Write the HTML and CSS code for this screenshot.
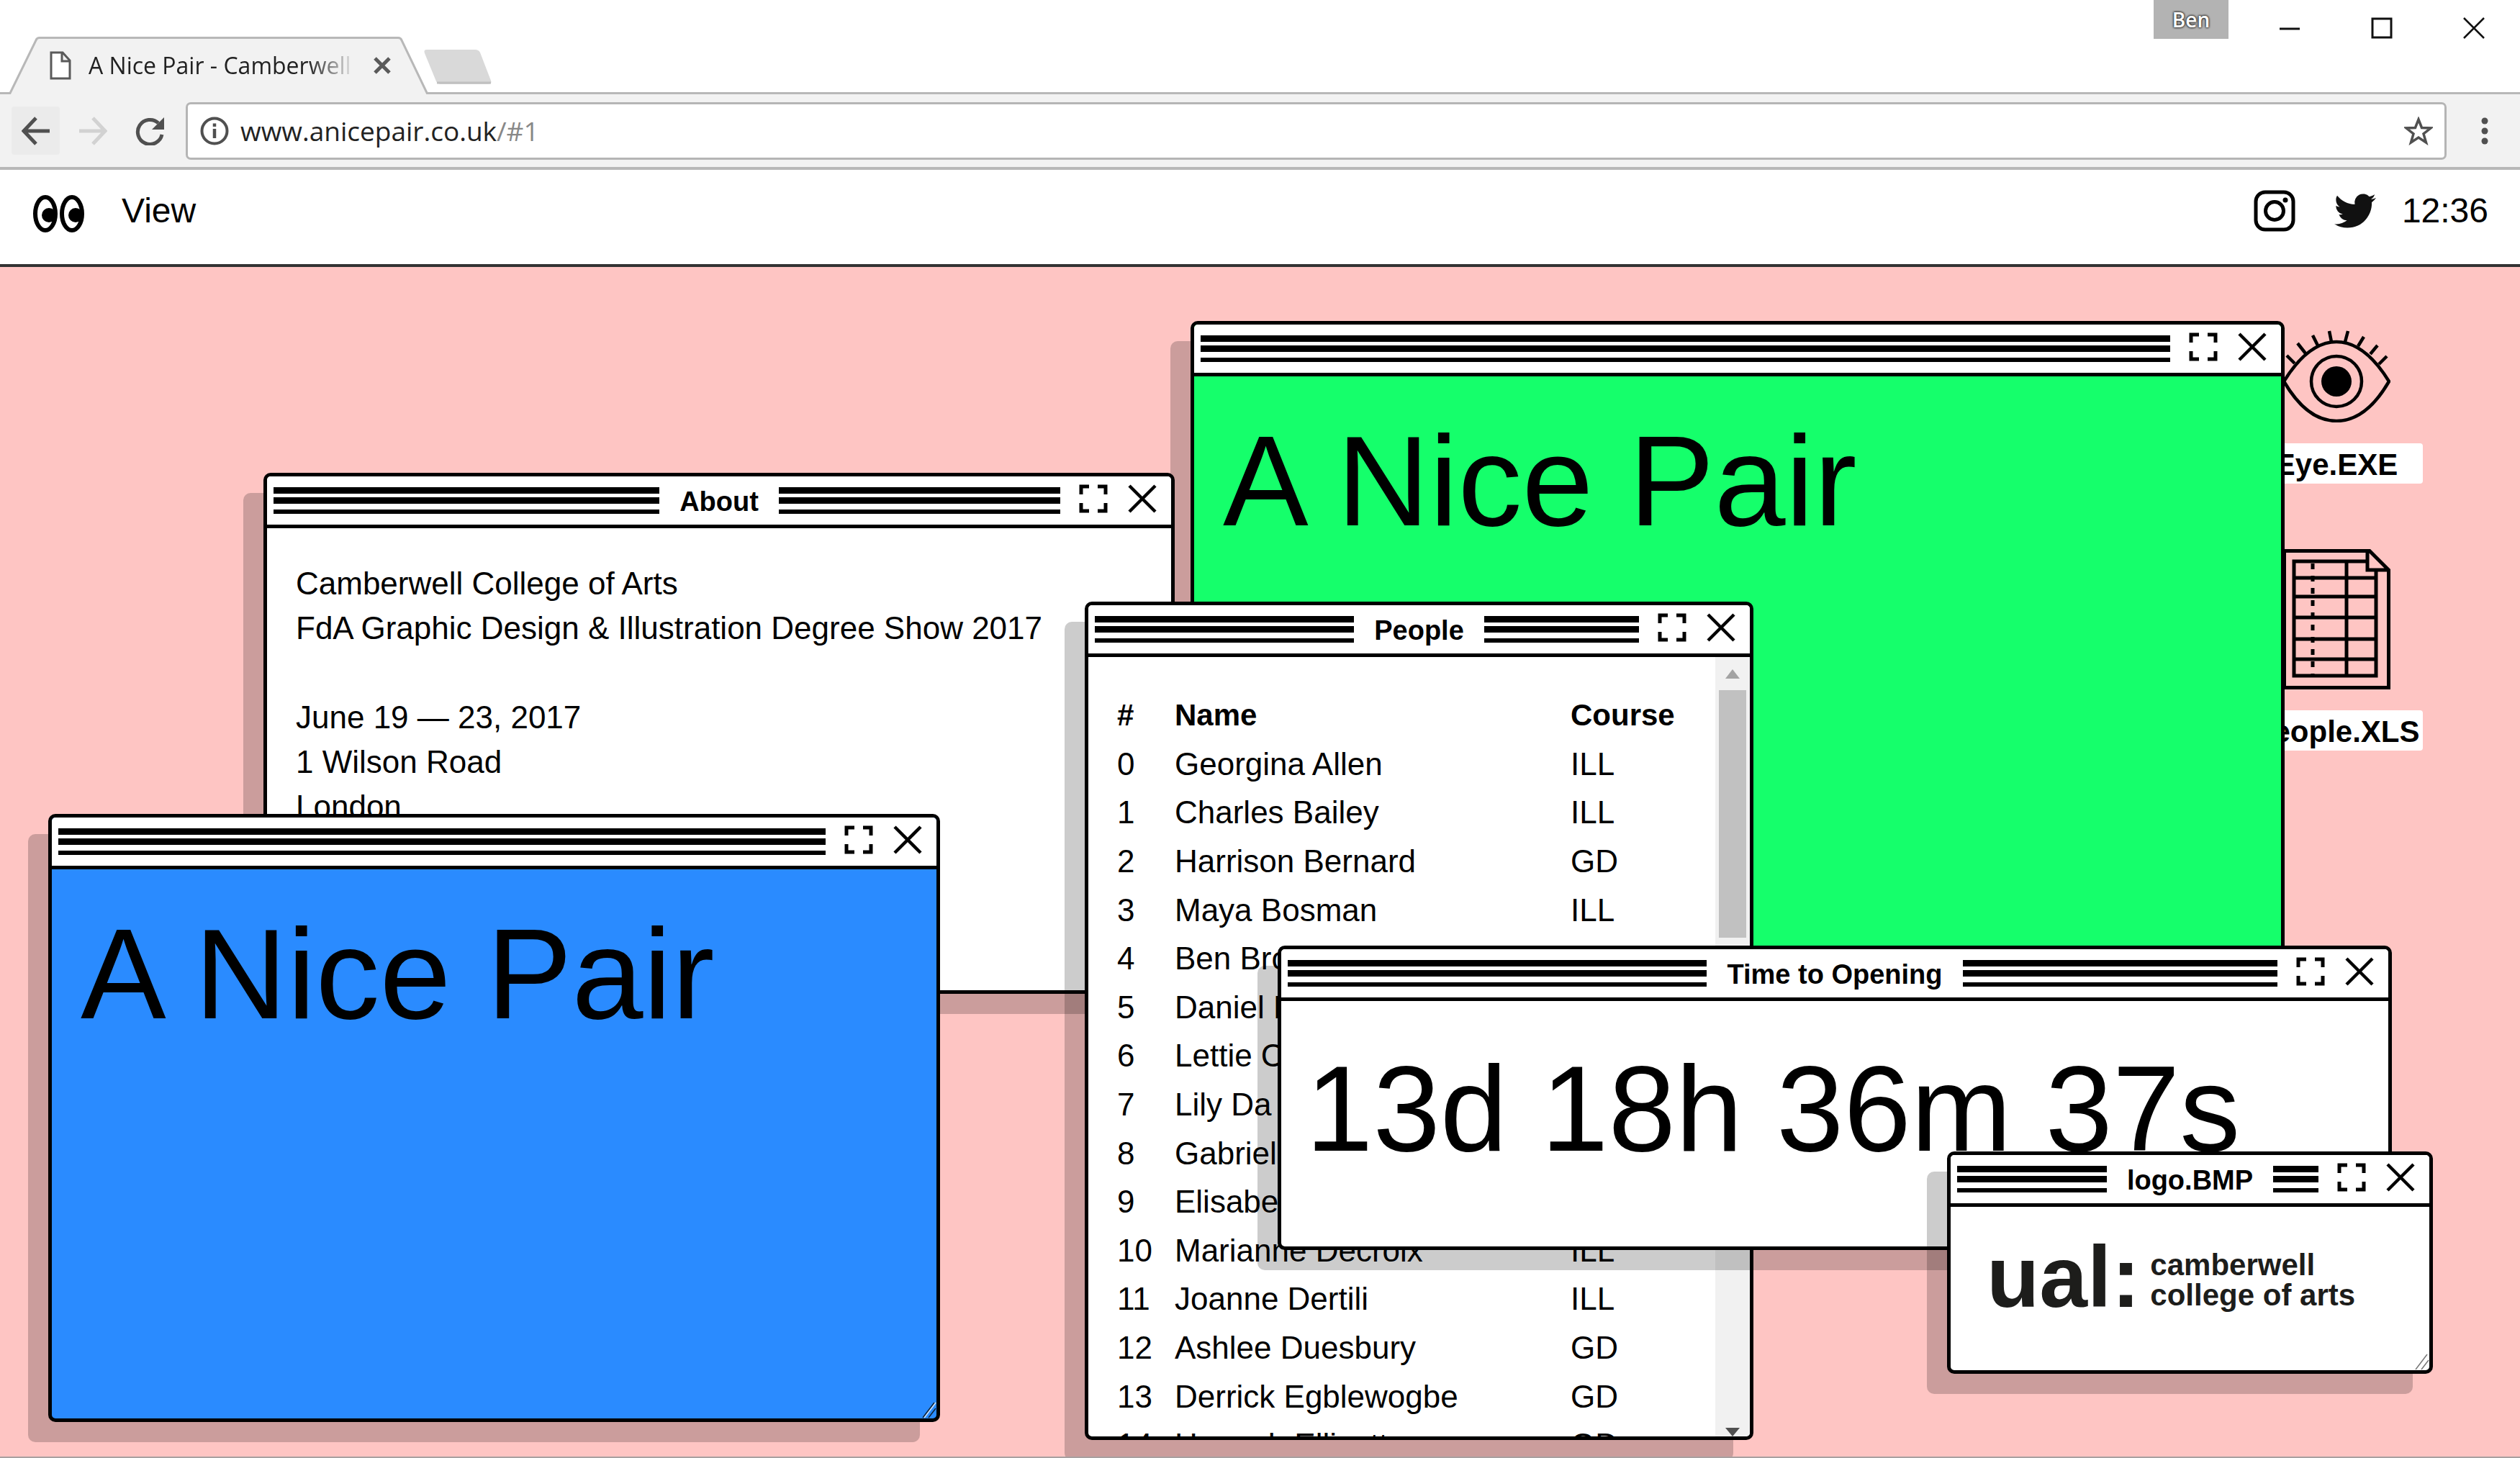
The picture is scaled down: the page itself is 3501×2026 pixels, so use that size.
FILE: index.html
```html
<!DOCTYPE html>
<html lang="en">
<head>
<meta charset="utf-8">
<meta name="viewport" content="width=device-width, initial-scale=1">
<title>A Nice Pair - Camberwell</title>
<link rel="stylesheet" href="styles.css">
</head>
<body>
<svg class="defs" aria-hidden="true">
  <symbol id="full" viewBox="0 0 40 40"><path d="M3 14V3h11M26 3h11v11M37 26v11H26M14 37H3V26" fill="none" stroke="#000" stroke-width="5"/></symbol>
  <symbol id="close" viewBox="0 0 40 40"><path d="M2 2l36 36M38 2L2 38" fill="none" stroke="#000" stroke-width="4.5"/></symbol>
</svg>

<div class="chrome">
  <div class="tabstrip">
    <div class="tab">
      <svg class="tab-shape" viewBox="0 0 594 80" aria-hidden="true"><path d="M14 80L50 5Q51 2 55 2H553Q557 2 558 5L594 80Z" fill="#f2f2f2"/><path d="M0 78.500H14L50 5Q51 1.500 55 1.500H553Q557 1.500 558 5L594 80" fill="none" stroke="#b8b8b8" stroke-width="3"/></svg>
      <svg class="tab-file" viewBox="0 0 30 40" aria-hidden="true"><path d="M2 2H18L28 13V38H2ZM17 2V14H28" fill="#fff" stroke="#5a5a5a" stroke-width="3"/></svg>
      <span class="tab-title">A Nice Pair - Camberwell</span>
      <button class="bare tab-close" aria-label="Close tab"><svg viewBox="0 0 24 24"><path d="M2 2l20 20M22 2L2 22" stroke="#5a5a5a" stroke-width="5"/></svg></button>
    </div>
    <button class="bare new-tab" aria-label="New tab"><svg viewBox="0 0 96 50"><path d="M5 1H72Q77 1 79 5L94 44Q96 49 90 49H24Q20 49 18 45L2 6Q0 1 5 1Z" fill="#d9d9d9"/><path d="M19 47H94" stroke="#c0c0c0" stroke-width="3"/></svg></button>
    <div class="window-controls">
      <span class="profile">Ben</span>
      <button class="bare wc" aria-label="Minimise"><svg viewBox="0 0 30 30"><path d="M1 16H29" stroke="#111" stroke-width="3"/></svg></button>
      <button class="bare wc" aria-label="Maximise"><svg viewBox="0 0 30 30"><rect x="2" y="2" width="26" height="26" fill="none" stroke="#111" stroke-width="3"/></svg></button>
      <button class="bare wc" aria-label="Close"><svg viewBox="0 0 30 30"><path d="M1 1l28 28M29 1L1 29" stroke="#111" stroke-width="2.500"/></svg></button>
    </div>
  </div>
  <div class="toolbar">
    <button class="bare nav back" aria-label="Back"><svg viewBox="0 0 40 40"><path d="M39 20H3M20 2L3 20L20 38" fill="none" stroke="#505050" stroke-width="5"/></svg></button>
    <button class="bare nav" aria-label="Forward"><svg viewBox="0 0 40 40"><path d="M1 20H37M20 2L37 20L20 38" fill="none" stroke="#d2d2d2" stroke-width="5"/></svg></button>
    <button class="bare nav" aria-label="Reload"><svg viewBox="0 0 40 40"><path d="M32 9A17 17 0 1 0 37 25" fill="none" stroke="#505050" stroke-width="5"/><path d="M40 1V18H23Z" fill="#505050"/></svg></button>
    <div class="address">
      <svg class="info" viewBox="0 0 40 40" aria-hidden="true"><circle cx="20" cy="20" r="17.500" fill="none" stroke="#505050" stroke-width="4"/><path d="M20 17V30M20 9.500V14" stroke="#505050" stroke-width="4.500"/></svg>
      <a class="url" href="#1">www.anicepair.co.uk<span>/#1</span></a>
      <button class="bare star" aria-label="Bookmark"><svg viewBox="0 0 40 40"><path d="M20 4L24.500 15.500L37 16L27 24L30.500 36L20 29L9.500 36L13 24L3 16L15.500 15.500Z" fill="none" stroke="#505050" stroke-width="3.500"/></svg></button>
    </div>
    <button class="bare more" aria-label="Menu"><svg viewBox="0 0 12 40"><circle cx="6" cy="6" r="4.500" fill="#505050"/><circle cx="6" cy="20" r="4.500" fill="#505050"/><circle cx="6" cy="34" r="4.500" fill="#505050"/></svg></button>
  </div>
</div>

<nav class="menubar">
  <a href="#" class="eyes" aria-label="Home"><svg viewBox="0 0 72 54"><g fill="#fff" stroke="#000" stroke-width="6"><ellipse cx="17" cy="27" rx="14" ry="23"/><ellipse cx="54" cy="27" rx="14" ry="23"/></g><circle cx="22" cy="29" r="10"/><circle cx="59" cy="29" r="10"/></svg></a>
  <button class="bare menu-item">View</button>
  <div class="menu-right">
    <a href="#" aria-label="Instagram"><svg class="social" viewBox="0 0 58 58"><rect x="3" y="3" width="52" height="52" rx="13" fill="none" stroke="#000" stroke-width="5"/><circle cx="29" cy="29" r="12.500" fill="none" stroke="#000" stroke-width="5"/><circle cx="44" cy="14" r="3.500"/></svg></a>
    <a href="#" aria-label="Twitter"><svg class="social" viewBox="0 0 24 24"><path fill="#111" d="M23.950 4.570a10 10 0 0 1-2.820.780 4.960 4.960 0 0 0 2.160-2.730c-.950.560-2 .960-3.130 1.190a4.920 4.920 0 0 0-8.380 4.480C7.690 8.090 4.070 6.130 1.640 3.160a4.820 4.820 0 0 0-.670 2.480c0 1.710.870 3.210 2.190 4.100a4.900 4.900 0 0 1-2.230-.620v.060a4.920 4.920 0 0 0 3.950 4.830 5 5 0 0 1-2.210.080 4.940 4.940 0 0 0 4.600 3.420A9.870 9.870 0 0 1 0 19.540a13.990 13.990 0 0 0 7.550 2.210c9.050 0 14-7.500 14-13.990 0-.210 0-.420-.020-.630A9.940 9.940 0 0 0 24 4.590z"/></svg></a>
    <time>12:36</time>
  </div>
</nav>

<main class="desktop">
  <div class="shortcuts">
    <a class="shortcut" href="#eye">
      <svg class="ic-eye" viewBox="0 0 150 128" fill="none" stroke="#000" stroke-width="4.500"><path d="M2 71Q36 16 75 16T148 71Q116 126 75 126T2 71Z"/><circle cx="75" cy="71" r="35"/><circle cx="75" cy="71" r="21" fill="#000" stroke="none"/><path d="M17 46L6 35M32 32L21 18M49 21L42 7M68 16L65 1M87 16L91 1M105 22L113 9M122 33L132 21M134 47L145 36"/></svg>
      <span>Eye.EXE</span>
    </a>
    <a class="shortcut" href="#people">
      <svg class="ic-sheet" viewBox="0 0 150 195" fill="none" stroke="#000" stroke-width="5"><path d="M2.500 2.500H121L147.500 29V192.500H2.500ZM118 2.500V29H147.500"/><path d="M118 17H16V176H130V29M89 17V176M16 40H130M16 66H130M16 95H130M16 125H130M16 153H130"/><path d="M42 20V176" stroke-dasharray="8 9"/></svg>
      <span>People.XLS</span>
    </a>
  </div>

  <section class="win green">
    <header class="bar"><i class="stripes"></i><div class="ctl"><button class="bare" aria-label="Full screen"><svg><use href="#full"/></svg></button><button class="bare" aria-label="Close"><svg><use href="#close"/></svg></button></div></header>
    <div class="body"><h1 class="big">A Nice Pair</h1></div>
  </section>

  <section class="win about">
    <header class="bar titled"><i class="stripes"></i><h2>About</h2><div class="right"><i class="stripes"></i><div class="ctl"><button class="bare" aria-label="Full screen"><svg><use href="#full"/></svg></button><button class="bare" aria-label="Close"><svg><use href="#close"/></svg></button></div></div></header>
    <div class="body"><p>Camberwell College of Arts<br>FdA Graphic Design &amp; Illustration Degree Show 2017</p><p>June 19 — 23, 2017<br>1 Wilson Road<br>London</p></div>
  </section>

  <section class="win blue">
    <header class="bar"><i class="stripes"></i><div class="ctl"><button class="bare" aria-label="Full screen"><svg><use href="#full"/></svg></button><button class="bare" aria-label="Close"><svg><use href="#close"/></svg></button></div></header>
    <div class="body"><h1 class="big">A Nice Pair</h1></div>
    <svg class="grip" viewBox="0 0 20 24"><path d="M3 23L19 2" stroke="#c8e0ff" stroke-width="2"/><path d="M1 23L17 2M9 23L19 10" stroke="#123" stroke-width="1.500"/></svg>
  </section>

  <section class="win people">
    <header class="bar titled"><i class="stripes"></i><h2>People</h2><div class="right"><i class="stripes"></i><div class="ctl"><button class="bare" aria-label="Full screen"><svg><use href="#full"/></svg></button><button class="bare" aria-label="Close"><svg><use href="#close"/></svg></button></div></div></header>
    <div class="scroller">
      <div class="table-wrap">
      <table>
        <thead><tr><th class="num">#</th><th class="name">Name</th><th>Course</th></tr></thead>
        <tbody>
          <tr><td>0</td><td>Georgina Allen</td><td>ILL</td></tr>
          <tr><td>1</td><td>Charles Bailey</td><td>ILL</td></tr>
          <tr><td>2</td><td>Harrison Bernard</td><td>GD</td></tr>
          <tr><td>3</td><td>Maya Bosman</td><td>ILL</td></tr>
          <tr><td>4</td><td>Ben Brough</td><td></td></tr>
          <tr><td>5</td><td>Daniel B</td><td></td></tr>
          <tr><td>6</td><td>Lettie C</td><td></td></tr>
          <tr><td>7</td><td>Lily Da</td><td></td></tr>
          <tr><td>8</td><td>Gabriel</td><td></td></tr>
          <tr><td>9</td><td>Elisabet</td><td></td></tr>
          <tr><td>10</td><td>Marianne Decroix</td><td>ILL</td></tr>
          <tr><td>11</td><td>Joanne Dertili</td><td>ILL</td></tr>
          <tr><td>12</td><td>Ashlee Duesbury</td><td>GD</td></tr>
          <tr><td>13</td><td>Derrick Egblewogbe</td><td>GD</td></tr>
          <tr><td>14</td><td>Hannah Ellicott</td><td>GD</td></tr>
        </tbody>
      </table>
      </div>
      <div class="track" aria-hidden="true">
        <svg viewBox="0 0 48 46"><path d="M14 30L24 17L34 30Z" fill="#a3a3a3"/></svg>
        <div class="thumb"></div>
        <svg class="down" viewBox="0 0 48 46"><path d="M14 34H34L24 46Z" fill="#505050"/></svg>
      </div>
    </div>
  </section>

  <section class="win countdown">
    <header class="bar titled"><i class="stripes"></i><h2>Time to Opening</h2><div class="right"><i class="stripes"></i><div class="ctl"><button class="bare" aria-label="Full screen"><svg><use href="#full"/></svg></button><button class="bare" aria-label="Close"><svg><use href="#close"/></svg></button></div></div></header>
    <div class="body"><p class="clock">13d 18h 36m 37s</p></div>
  </section>

  <section class="win logo">
    <header class="bar titled"><i class="stripes"></i><h2>logo.BMP</h2><div class="right"><i class="stripes"></i><div class="ctl"><button class="bare" aria-label="Full screen"><svg><use href="#full"/></svg></button><button class="bare" aria-label="Close"><svg><use href="#close"/></svg></button></div></div></header>
    <div class="body ual"><strong>ual:</strong><span>camberwell<br>college of arts</span></div>
    <svg class="grip" viewBox="0 0 20 24"><path d="M1 23L17 2M9 23L19 10" stroke="#777" stroke-width="1.500"/></svg>
  </section>
</main>
</body>
</html>
```
FILE: styles.css
```css
* { box-sizing: border-box; }
html, body { height: 100%; }
body {
  margin: 0;
  display: flex;
  flex-direction: column;
  background: #fff;
  color: #000;
  font-family: "Liberation Sans", Arial, sans-serif;
  font-size: 44px;
}
a { color: inherit; text-decoration: none; }
svg { display: block; }
.defs { position: absolute; width: 0; height: 0; }
.bare { border: 0; padding: 0; margin: 0; background: none; font: inherit; color: inherit; display: block; }

/* browser frame */
.chrome { font-family: "Open Sans", "Noto Sans", sans-serif; }
.tabstrip { height: 131px; display: flex; align-items: flex-end; border-bottom: 3px solid #b8b8b8; }
.tab { position: relative; width: 594px; height: 80px; margin-bottom: -3px; padding-left: 69px; display: flex; align-items: center; }
.tab-shape { position: absolute; left: 0; top: 0; width: 594px; height: 80px; }
.tab-file { position: relative; width: 30px; height: 40px; }
.tab-title {
  position: relative;
  width: 372px;
  margin: 0 24px;
  font-size: 32px;
  line-height: 44px;
  color: #222;
  white-space: nowrap;
  overflow: hidden;
  -webkit-mask-image: linear-gradient(to right, #000 82%, transparent);
  mask-image: linear-gradient(to right, #000 82%, transparent);
}
.tab-close { position: relative; }
.tab-close svg { width: 24px; height: 24px; }
.new-tab { align-self: flex-end; margin: 0 0 10px -6px; }
.new-tab svg { width: 96px; height: 50px; }
.window-controls { margin-left: auto; align-self: flex-start; display: flex; gap: 98px; padding-right: 49px; }
.profile {
  width: 104px;
  height: 54px;
  margin-right: -28px;
  background: #b3b3b3;
  color: #fff;
  font-size: 28px;
  font-weight: 600;
  line-height: 54px;
  text-align: center;
  text-shadow: 0 0 3px #333, 0 0 3px #333, 0 0 3px #333;
}
.wc svg { width: 30px; height: 30px; margin-top: 23px; }
.toolbar { height: 105px; padding: 0 43px 0 16px; display: flex; align-items: center; background: #f2f2f2; border-bottom: 4px solid #b8b8b8; }
.nav { width: 67px; height: 67px; margin-right: 12px; display: grid; place-items: center; border-radius: 4px; }
.nav svg { width: 40px; height: 40px; }
.back { background: #ebebeb; }
.address { flex: 1; height: 80px; margin: 0 47px 0 5px; padding: 0 16px 0 17px; display: flex; align-items: center; background: #fff; border: 3px solid #b5b5b5; border-radius: 7px; }
.info { width: 40px; height: 40px; }
.url { flex: 1; margin-left: 16px; font-size: 37px; line-height: 50px; color: #222; }
.url span { color: #888; }
.star svg { width: 40px; height: 40px; }
.more svg { width: 12px; height: 40px; }

/* site menu */
.menubar { height: 135px; padding: 0 44px 17px 46px; display: flex; align-items: center; border-bottom: 4px solid #333; font-size: 48px; line-height: 60px; }
.eyes svg { width: 72px; height: 54px; margin-top: 7px; }
.menu-item { margin-left: 51px; }
.menu-right { margin-left: auto; display: flex; align-items: center; gap: 36px; }
.menu-right a + a { margin-left: 18px; }
.social { width: 58px; height: 58px; }

/* desktop */
.desktop { position: relative; flex: 1; overflow: hidden; background: #fec5c3; border-bottom: 2px solid #a8a0a0; }
.shortcuts { position: absolute; top: 88px; right: 135px; width: 240px; }
.shortcut { display: flex; flex-direction: column; align-items: center; margin-bottom: 91px; }
.shortcut span { width: 240px; height: 56px; margin-top: 29px; border-radius: 4px; background: #fff; font-size: 42px; font-weight: bold; line-height: 60px; text-align: center; }
.ic-eye { width: 150px; height: 128px; }
.ic-sheet { width: 150px; height: 195px; }
.win { position: absolute; display: flex; flex-direction: column; background: #fff; border: 5px solid #000; border-radius: 10px; box-shadow: -28px 28px 0 rgba(0, 0, 0, 0.2); }
.green { left: 1654px; top: 75px; width: 1520px; height: 1160px; background: #15ff6b; }
.about { left: 366px; top: 286px; width: 1266px; height: 724px; }
.blue { left: 67px; top: 760px; width: 1239px; height: 845px; background: #2a8bff; }
.people { left: 1507px; top: 465px; width: 929px; height: 1165px; }
.countdown { left: 1775px; top: 943px; width: 1548px; height: 423px; }
.logo { left: 2705px; top: 1229px; width: 675px; height: 309px; }

.bar { flex: none; height: 72px; padding: 0 9px; display: flex; gap: 26px; background: #fff; border-bottom: 5px solid #000; border-radius: 5px 5px 0 0; }
.titled { display: grid; grid-template-columns: 1fr auto 1fr; gap: 28px; }
.titled h2 { margin: 0; padding-top: 2px; font-size: 38px; line-height: 67px; white-space: nowrap; }
.right { display: flex; gap: 26px; min-width: 0; }
.stripes {
  flex: 1;
  height: 37px;
  margin-top: 15px;
  background: linear-gradient(#000 0 9px, #fff 9px 14px, #000 14px 23px, #fff 23px 31px, #000 31px 37px);
}
.ctl { display: flex; align-items: flex-start; gap: 28px; padding: 11px 11px 0 0; }
.ctl svg { width: 40px; height: 40px; }

.body { padding: 46px 40px; line-height: 62px; }
.body p { margin: 0 0 62px; }
.body .big { margin: 0; font-size: 178px; font-weight: normal; line-height: 200px; white-space: nowrap; }
.countdown .body { padding-left: 34px; }
.body .clock { margin: 0; font-size: 168px; line-height: 208px; white-space: nowrap; }
.grip { position: absolute; right: 0; bottom: 0; width: 20px; height: 24px; }

.scroller { flex: 1; min-height: 0; display: flex; }
.table-wrap { flex: 1; padding: 47px 0 0 40px; overflow: hidden; }
table { width: 100%; height: 1082px; border-collapse: collapse; table-layout: fixed; }
thead tr { height: 68px; }
th, td { padding: 0; text-align: left; line-height: 60px; white-space: nowrap; }
th { height: 68px; font-size: 42px; }
.num { width: 80px; }
.name { width: 550px; }
.track { width: 48px; display: flex; flex-direction: column; background: #f1f1f1; overflow: hidden; border-radius: 0 0 5px 0; }
.track svg { width: 48px; height: 46px; }
.thumb { height: 344px; margin: 0 5px; background: #c1c1c1; }
.track .down { margin-top: auto; }

.ual { display: flex; align-items: flex-start; padding-left: 50px; color: #1d1d1b; font-weight: bold; }
.ual strong { font-size: 120px; line-height: 102px; padding-right: 14px; }
.ual span { font-size: 42px; line-height: 42px; padding-top: 14px; white-space: nowrap; }
```
